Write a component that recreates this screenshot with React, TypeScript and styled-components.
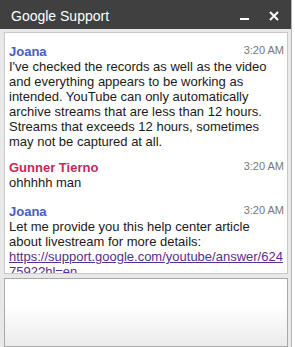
import styled, { createGlobalStyle } from 'styled-components';

const GlobalStyle = createGlobalStyle`
  body {
    margin: 0;
    background: #fff;
    font-family: "Liberation Sans", Arial, sans-serif;
  }
`;

interface Message {
  author: string;
  color: string;
  time: string;
  text: string;
  link?: string;
  space: number;
}

const messages: Message[] = [
  {
    author: 'Joana',
    color: '#3d61c6',
    time: '3:20 AM',
    space: 11,
    text: "I've checked the records as well as the video and everything appears to be working as intended. YouTube can only automatically archive streams that are less than 12 hours. Streams that exceeds 12 hours, sometimes may not be captured at all.",
  },
  {
    author: 'Gunner Tierno',
    color: '#c4285e',
    time: '3:20 AM',
    space: 11,
    text: 'ohhhhh man',
  },
  {
    author: 'Joana',
    color: '#3d61c6',
    time: '3:20 AM',
    space: 14,
    text: 'Let me provide you this help center article about livestream for more details:',
    link: 'https://support.google.com/youtube/answer/6247592?hl=en',
  },
];

const MinimizeIcon = () => (
  <svg width="10" height="10" viewBox="0 0 10 10">
    <rect x="0" y="7" width="9" height="2" fill="#fff" />
  </svg>
);

const CloseIcon = () => (
  <svg width="10" height="10" viewBox="0 0 10 10">
    <path d="M1 1 L9 9 M9 1 L1 9" stroke="#fff" strokeWidth="2" />
  </svg>
);

export default function App() {
  return (
    <>
      <GlobalStyle />
      <Window>
        <Header>
          <Title>Google Support</Title>
          <Controls>
            <IconButton><MinimizeIcon /></IconButton>
            <IconButton><CloseIcon /></IconButton>
          </Controls>
        </Header>
        <Body>
          <Transcript>
            {messages.map((m, i) => (
              <Entry key={i} space={m.space}>
                <EntryHead>
                  <Author color={m.color}>{m.author}</Author>
                  <Time>{m.time}</Time>
                </EntryHead>
                <Text>
                  {m.text}
                  {m.link && (
                    <>
                      <br />
                      <Link href={m.link}>{m.link}</Link>
                    </>
                  )}
                </Text>
              </Entry>
            ))}
          </Transcript>
          <Compose />
        </Body>
      </Window>
    </>
  );
}

const Window = styled.div`
  width: 292px;
  height: 347px;
  display: flex;
  flex-direction: column;
  background: #e8e8e8;
  border-right: 1px solid #b4b4b4;
  box-sizing: border-box;
  overflow: hidden;
`;

const Header = styled.div`
  height: 29px;
  flex-shrink: 0;
  display: flex;
  align-items: center;
  justify-content: space-between;
  padding: 0 12px 0 11px;
  background: #404040;
  color: #fff;
`;

const Title = styled.span`
  font-size: 14px;
  padding-top: 2px;
`;

const Controls = styled.div`
  display: flex;
  align-items: center;
  gap: 19px;
  padding-top: 3px;
`;

const IconButton = styled.span`
  display: flex;
  width: 10px;
  height: 10px;
`;

const Body = styled.div`
  flex: 1;
  display: flex;
  flex-direction: column;
  gap: 4px;
  padding: 3px 3px 0 4px;
`;

const Transcript = styled.div`
  height: 242px;
  flex-shrink: 0;
  box-sizing: border-box;
  border: 1px solid #c8c8c8;
  background: #fff;
  padding: 0 3px 0 4px;
  overflow: hidden;
`;

const Entry = styled.div<{ space: number }>`
  padding-top: ${p => p.space}px;
`;

const EntryHead = styled.div`
  display: flex;
  justify-content: space-between;
  align-items: flex-start;
`;

const Author = styled.span<{ color: string }>`
  color: ${p => p.color};
  font-size: 13px;
  font-weight: bold;
  line-height: 15px;
`;

const Time = styled.span`
  color: #777;
  font-size: 11px;
  line-height: 12px;
`;

const Text = styled.div`
  color: #1a1a1a;
  font-size: 13px;
  line-height: 15px;
`;

const Link = styled.a`
  color: #5a2d8e;
  text-decoration: underline;
  overflow-wrap: anywhere;
`;

const Compose = styled.div`
  flex: 1;
  border: 1px solid #a9a9a9;
  background: linear-gradient(#fff 40%, #ebebeb);
`;
